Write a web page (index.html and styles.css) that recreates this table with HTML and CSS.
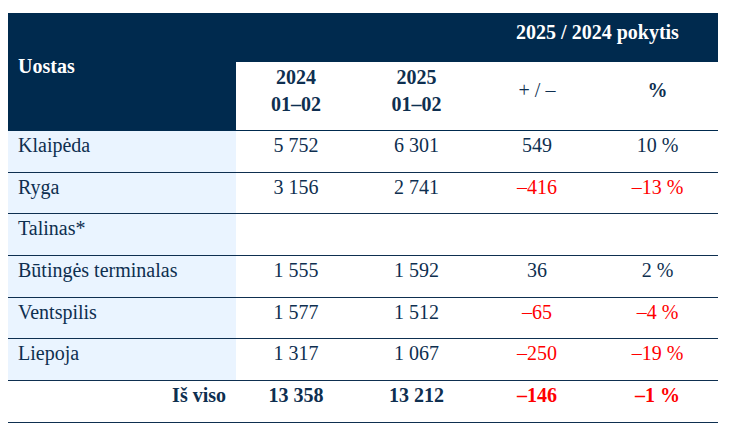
FILE: index.html
```html
<!DOCTYPE html>
<html lang="lt">
<head>
<meta charset="utf-8">
<title>Uostai</title>
<link rel="stylesheet" href="styles.css">
</head>
<body>
<table class="ports">
  <colgroup>
    <col class="c-name">
    <col class="c-num">
    <col class="c-num2">
    <col class="c-num">
    <col class="c-num2">
  </colgroup>
  <thead>
    <tr class="h1">
      <th rowspan="2" class="h-name">Uostas</th>
      <th class="h-dark"></th>
      <th class="h-dark"></th>
      <th colspan="2" class="h-dark">2025 / 2024 pokytis</th>
    </tr>
    <tr class="h2">
      <th>2024<br>01–02</th>
      <th>2025<br>01–02</th>
      <th class="h-plain">+ / –</th>
      <th>%</th>
    </tr>
  </thead>
  <tbody>
    <tr><td class="name">Klaipėda</td><td>5 752</td><td>6 301</td><td>549</td><td>10 %</td></tr>
    <tr><td class="name">Ryga</td><td>3 156</td><td>2 741</td><td class="neg">–416</td><td class="neg">–13 %</td></tr>
    <tr><td class="name">Talinas*</td><td></td><td></td><td></td><td></td></tr>
    <tr><td class="name">Būtingės terminalas</td><td>1 555</td><td>1 592</td><td>36</td><td>2 %</td></tr>
    <tr><td class="name">Ventspilis</td><td>1 577</td><td>1 512</td><td class="neg">–65</td><td class="neg">–4 %</td></tr>
    <tr><td class="name">Liepoja</td><td>1 317</td><td>1 067</td><td class="neg">–250</td><td class="neg">–19 %</td></tr>
    <tr class="total"><td class="name">Iš viso</td><td>13 358</td><td>13 212</td><td class="neg">–146</td><td class="neg">–1 %</td></tr>
  </tbody>
</table>
</body>
</html>
```
FILE: styles.css
```css
html, body {
  margin: 0;
  background: #ffffff;
}
body {
  padding: 13px 8px 0 8px;
}
.ports {
  width: 710px;
  border-collapse: collapse;
  table-layout: fixed;
  font-family: "Liberation Serif", "Times New Roman", serif;
  font-size: 20px;
  line-height: 27px;
  color: #0e2f50;
}
.c-name { width: 228px; }
.c-num { width: 120px; }
.c-num2 { width: 121px; }

.ports th {
  font-weight: bold;
  text-align: center;
  vertical-align: middle;
  padding: 1px 4px 12px 4px;
}
.h1 th {
  height: 36px;
  background: #002a4e;
  color: #ffffff;
}
.h-name.h-name {
  text-align: left;
  padding-left: 10px;
  background: #002a4e;
  color: #ffffff;
  border-bottom: 1px solid #002a4e;
}
.h2 th {
  height: 55px;
  background: #ffffff;
  color: #0e2f50;
  border-bottom: 1px solid #002a4e;
}
.h2 .h-plain {
  font-weight: normal;
}

.ports td {
  height: 41.7px;
  box-sizing: border-box;
  padding: 1px 4px 1px 4px;
  vertical-align: top;
  text-align: center;
  border-bottom: 1px solid #0e2f50;
}
.ports td.name {
  text-align: left;
  padding-left: 10px;
  background: #eaf4ff;
}
.ports td.neg {
  color: #ff0000;
}
.total td {
  font-weight: bold;
}
.total td.name {
  background: #ffffff;
  text-align: right;
  padding-right: 10px;
}
```
